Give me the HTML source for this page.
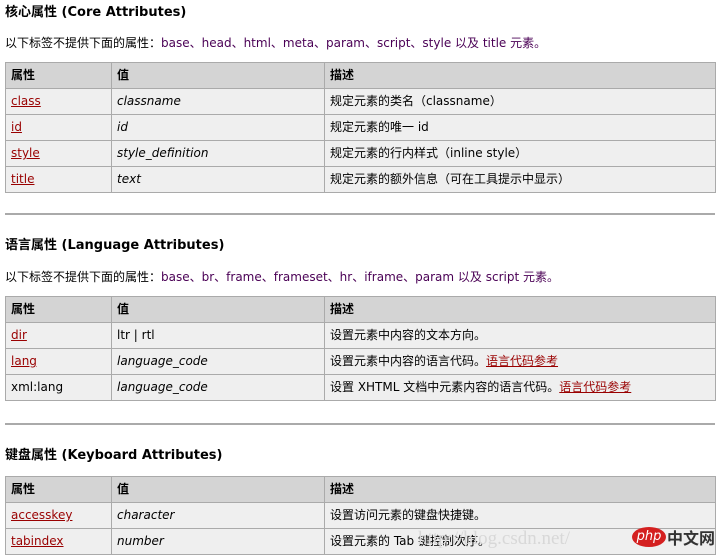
<!DOCTYPE html>
<html><head><meta charset="utf-8"><style>
body{margin:0;width:722px;height:557px;background:#fff;font-family:"DejaVu Sans","Noto Sans CJK SC",sans-serif;font-size:12px;line-height:15px;color:#000;position:relative;overflow:hidden}
.a{position:absolute;left:5px}
h2{margin:0;font-size:13px;font-weight:bold;line-height:17px}
p{margin:0;font-size:12px}
table{border-collapse:collapse;width:711px;table-layout:fixed}
td,th{border:1px solid #aaa;height:25px;padding:0 0 0 5px;line-height:15px;text-align:left;background:#efefef;font-weight:normal}
th{background:#d4d4d4;font-weight:bold}
a{color:#900;text-decoration:underline}
i{font-style:italic}
.hr{position:absolute;left:5px;width:710px;height:2px;background:#aaa}
.pp{color:#4a0055}
</style></head><body>
<div class="a" style="top:4px"><h2>核心属性 (Core Attributes)</h2></div>
<div class="a" style="top:36px"><p>以下标签不提供下面的属性：<span class="pp">base、head、html、meta、param、script、style 以及 title 元素。</span></p></div>
<div class="a" style="top:62px"><table>
<colgroup><col style="width:106px"><col style="width:213px"><col></colgroup>
<tr><th>属性</th><th>值</th><th>描述</th></tr>
<tr><td><a>class</a></td><td><i>classname</i></td><td>规定元素的类名（classname）</td></tr>
<tr><td><a>id</a></td><td><i>id</i></td><td>规定元素的唯一 id</td></tr>
<tr><td><a>style</a></td><td><i>style_definition</i></td><td>规定元素的行内样式（inline style）</td></tr>
<tr><td><a>title</a></td><td><i>text</i></td><td>规定元素的额外信息（可在工具提示中显示）</td></tr>
</table></div>
<div class="hr" style="top:213px"></div>
<div class="a" style="top:237px"><h2>语言属性 (Language Attributes)</h2></div>
<div class="a" style="top:270px"><p>以下标签不提供下面的属性：<span class="pp">base、br、frame、frameset、hr、iframe、param 以及 script 元素。</span></p></div>
<div class="a" style="top:296px"><table>
<colgroup><col style="width:106px"><col style="width:213px"><col></colgroup>
<tr><th>属性</th><th>值</th><th>描述</th></tr>
<tr><td><a>dir</a></td><td>ltr | rtl</td><td>设置元素中内容的文本方向。</td></tr>
<tr><td><a>lang</a></td><td><i>language_code</i></td><td>设置元素中内容的语言代码。<a>语言代码参考</a></td></tr>
<tr><td>xml:lang</td><td><i>language_code</i></td><td>设置 XHTML 文档中元素内容的语言代码。<a>语言代码参考</a></td></tr>
</table></div>
<div class="hr" style="top:423px"></div>
<div class="a" style="top:447px"><h2>键盘属性 (Keyboard Attributes)</h2></div>
<div class="a" style="top:476px"><table>
<colgroup><col style="width:106px"><col style="width:213px"><col></colgroup>
<tr><th>属性</th><th>值</th><th>描述</th></tr>
<tr><td><a>accesskey</a></td><td><i>character</i></td><td>设置访问元素的键盘快捷键。</td></tr>
<tr><td><a>tabindex</a></td><td><i>number</i></td><td>设置元素的 Tab 键控制次序。</td></tr>
</table></div>
<div style="position:absolute;left:418px;top:528px;font-family:'Liberation Serif',serif;font-size:19px;line-height:22px;color:#d8d8d8">http://blog.csdn.net/</div>
<div style="position:absolute;left:632px;top:527px;width:34px;height:20px;border-radius:50%;background:#d42020;color:#fff;font-size:13px;text-align:center;line-height:19px;font-style:italic">php</div>
<div style="position:absolute;left:667px;top:526px;font-size:16px;line-height:22px;font-weight:bold;color:#333;font-family:'Noto Sans CJK SC',sans-serif">中文网</div>
</body></html>
